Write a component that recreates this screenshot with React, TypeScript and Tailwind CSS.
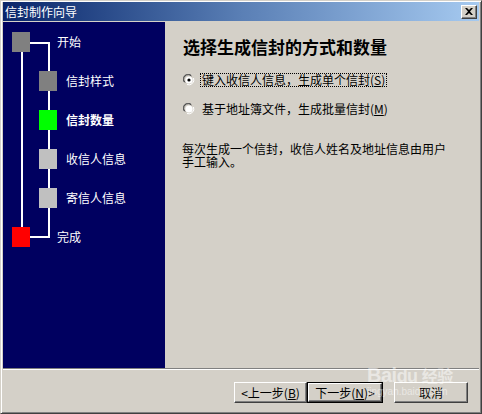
import React from "react";

const font = { fontFamily: '"SimSun", "Noto Sans CJK SC", "Liberation Sans", sans-serif' };

type Step = { label: string; level: 0 | 1; color: string; bold?: boolean };

const steps: Step[] = [
  { label: "开始", level: 0, color: "bg-[#808080]" },
  { label: "信封样式", level: 1, color: "bg-[#808080]" },
  { label: "信封数量", level: 1, color: "bg-[#00ff00]", bold: true },
  { label: "收信人信息", level: 1, color: "bg-[#c0c0c0]" },
  { label: "寄信人信息", level: 1, color: "bg-[#c0c0c0]" },
  { label: "完成", level: 0, color: "bg-[#ff0000]" },
];

const Radio: React.FC<{ checked?: boolean }> = ({ checked }) => (
  <svg width="12" height="12" viewBox="0 0 12 12" className="shrink-0">
    <path d="M1 8 A5 5 0 0 1 8 1" stroke="#808080" strokeWidth="1" fill="none" />
    <path d="M2 8.5 A4 4 0 0 1 8.5 2" stroke="#404040" strokeWidth="1" fill="none" />
    <path d="M10.5 4 A5 5 0 0 1 4 10.5" stroke="#ffffff" strokeWidth="1" fill="none" />
    <circle cx="6" cy="6" r="3.6" fill="#ffffff" />
    {checked && <circle cx="6" cy="6" r="1.6" fill="#000000" />}
  </svg>
);

const Button: React.FC<{ children: React.ReactNode; w: string; primary?: boolean }> = ({
  children,
  w,
  primary,
}) => (
  <div className={`${w} h-[21px] ${primary ? "border border-black" : ""}`}>
    <div className="h-full w-full bg-[#d4d0c8] border-t border-l border-t-white border-l-white border-r border-b border-r-[#404040] border-b-[#404040] shadow-[inset_-1px_-1px_#808080] flex items-center justify-center text-[12px] text-black">
      {children}
    </div>
  </div>
);

export default function App() {
  return (
    <div
      style={font}
      className="relative w-[482px] h-[414px] bg-[#d4d0c8] border border-t-[#d4d0c8] border-l-[#d4d0c8] border-r-[#404040] border-b-[#404040] shadow-[inset_1px_1px_#ffffff,inset_-1px_-1px_#808080] p-[2px] flex flex-col overflow-hidden"
    >
      {/* Title bar */}
      <div className="h-[19px] bg-linear-to-r from-[#0a246a] via-[#5a7fb5] to-[#a6caf0] flex items-center pl-[2px] pr-[2px] mt-[-1px]">
        <span className="text-white text-[12px] leading-none">信封制作向导</span>
        <div className="ml-auto w-[16px] h-[14px] bg-[#d4d0c8] border-t border-l border-t-white border-l-white border-r border-b border-r-[#404040] border-b-[#404040] shadow-[inset_-1px_-1px_#808080] flex items-center justify-center">
          <svg width="8" height="7" viewBox="0 0 8 7">
            <path d="M0 0h2l2 2 2-2h2L5 3.5 8 7H6L4 5 2 7H0l3-3.5z" fill="#000" />
          </svg>
        </div>
      </div>

      {/* Body */}
      <div className="flex h-[346px] mt-px">
        <div className="relative w-[162px] bg-[#000060] pt-[10px]">
          <svg className="absolute left-0 top-0" width="162" height="240">
            <rect x="18" y="30" width="2" height="175" fill="#ffffff" />
            <rect x="27" y="20" width="20" height="2" fill="#ffffff" />
            <rect x="45" y="20" width="2" height="196" fill="#ffffff" />
            <rect x="27" y="214" width="20" height="2" fill="#ffffff" />
          </svg>
          {steps.map((s) => (
            <div key={s.label} className="relative h-[39px] flex items-start">
              <div
                className={`flex items-center h-[20px] ${s.level === 0 ? "ml-[9px]" : "ml-[36px]"}`}
              >
                <div className={`w-[18px] h-[20px] ${s.color}`} />
                <span
                  className={`text-white text-[12px] leading-none ${s.level === 0 ? "ml-[27px]" : "ml-[9px]"} ${s.bold ? "font-bold" : ""}`}
                >
                  {s.label}
                </span>
              </div>
            </div>
          ))}
        </div>

        <div className="flex-1 pl-[18px] pt-[15px] text-black">
          <div className="text-[17px] font-bold leading-[20px]">选择生成信封的方式和数量</div>
          <div className="mt-[16px] flex items-center gap-[5px] h-[14px]">
            <Radio checked />
            <span className="text-[12px] leading-[12px] px-px border border-dotted border-black">
              键入收信人信息，生成单个信封(<u>S</u>)
            </span>
          </div>
          <div className="mt-[15px] flex items-center gap-[5px] h-[14px]">
            <Radio />
            <span className="text-[12px] leading-[12px] px-[2px]">
              基于地址簿文件，生成批量信封(<u>M</u>)
            </span>
          </div>
          <p className="mt-[26px] w-[270px] text-[12px] leading-[13px] -ml-px">
            每次生成一个信封，收信人姓名及地址信息由用户手工输入。
          </p>
        </div>
      </div>

      {/* Separator */}
      <div className="h-[2px] border-t border-t-[#808080] border-b border-b-white" />

      {/* Buttons */}
      <div className="flex-1 flex justify-end items-start pt-[12px] pr-[11px]">
        <Button w="w-[73px]">&lt;上一步(<u>B</u>)</Button>
        <Button w="w-[76px]" primary>
          下一步(<u>N</u>)&gt;
        </Button>
        <div className="w-[11px]" />
        <Button w="w-[74px]">取消</Button>
      </div>

      {/* Watermark */}
      <div className="absolute left-[366px] top-[364px] text-white/50 pointer-events-none leading-none">
        <div className="text-[20px] font-bold tracking-tight" style={{ fontFamily: '"Liberation Sans", sans-serif' }}>
          Bai<span className="text-[18px]">du</span>
          <span className="text-[16px] ml-1" style={font}>经验</span>
        </div>
        <div className="text-[10px] mt-[2px]" style={{ fontFamily: '"Liberation Sans", sans-serif' }}>
          jingyan.baidu.com
        </div>
      </div>
    </div>
  );
}
